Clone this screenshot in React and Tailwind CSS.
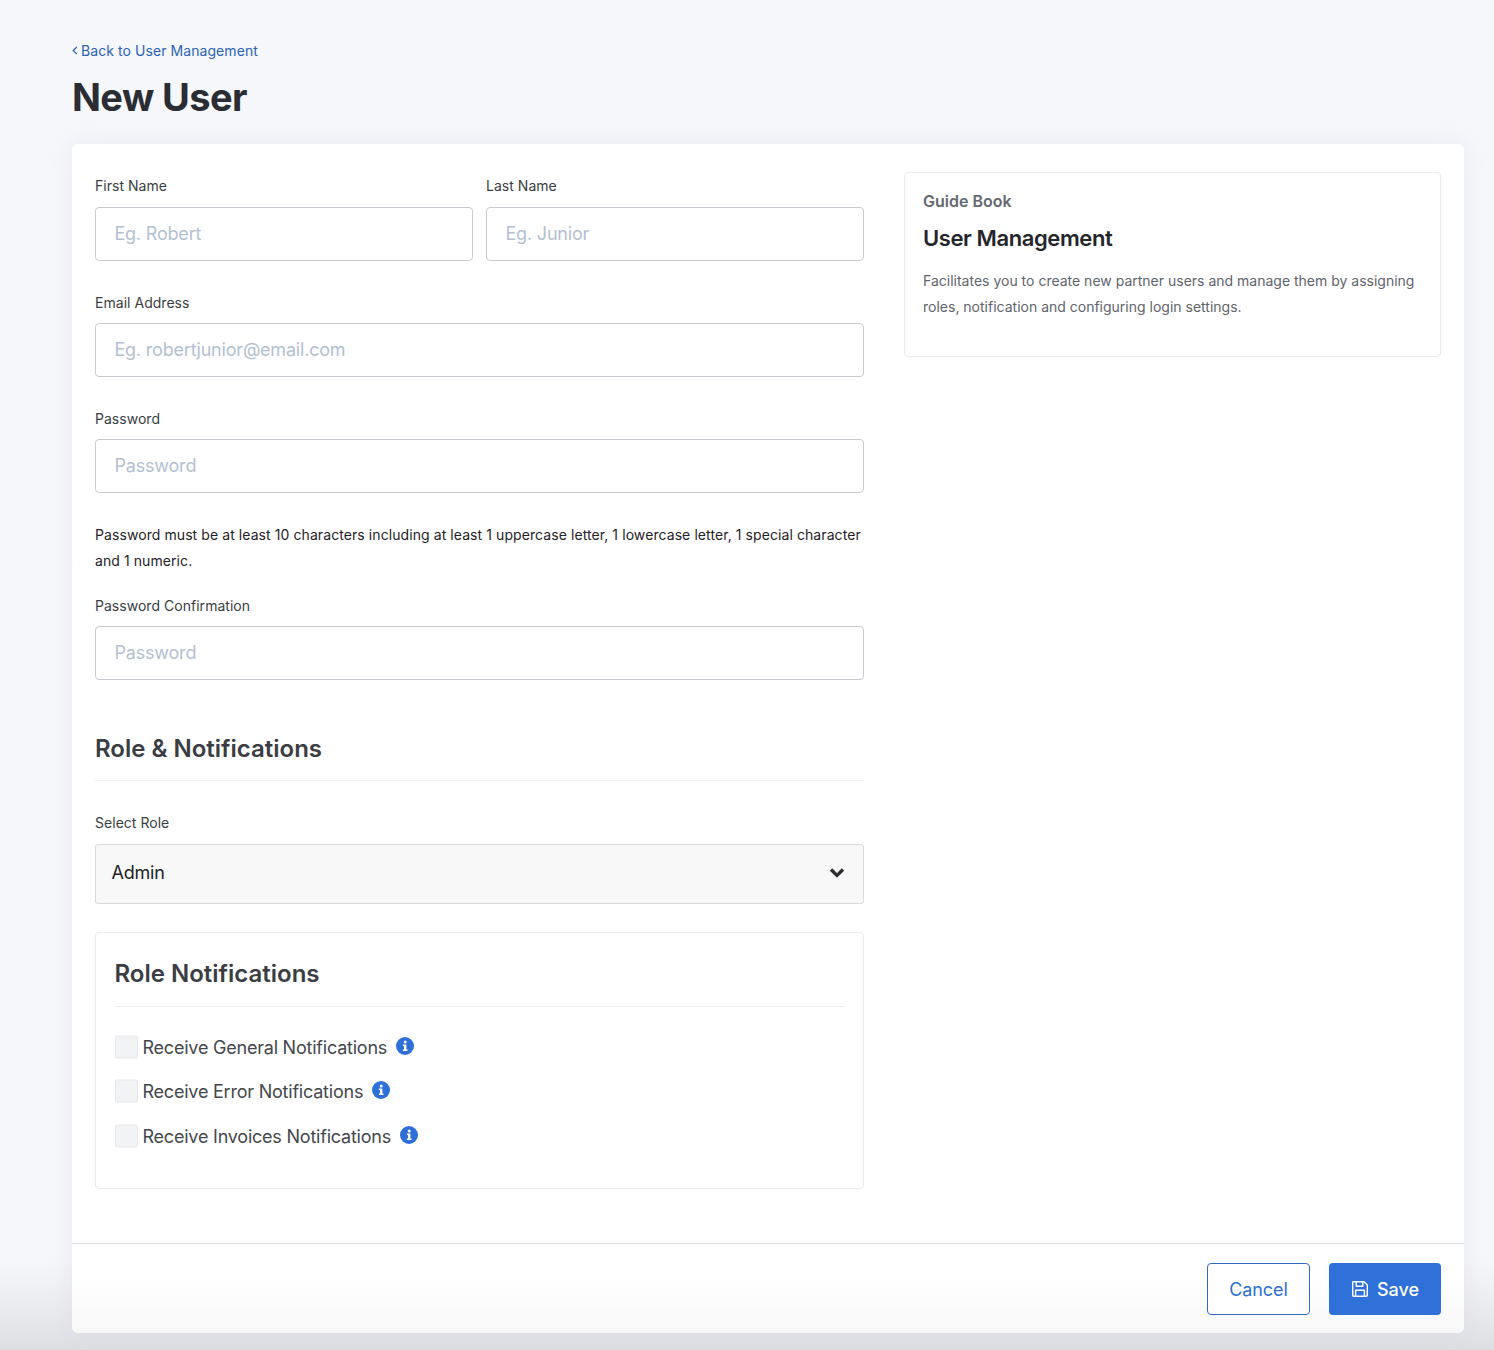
import React from "react";

function Field({ label, placeholder, className = "", gap = "mt-[10px]" }) {
  return (
    <div className={className}>
      <label className="block h-[21px] text-[14px] leading-[21px] tracking-[0.03px] text-[#3a3d42]">{label}</label>
      <input
        readOnly
        placeholder={placeholder}
        className={`${gap} block h-[54px] w-full rounded-[4px] border border-[#c9cbd0] bg-white pb-[1px] pl-[18.5px] pr-[19px] text-[18px] tracking-[-0.2px] text-[#333] outline-none placeholder:text-[#b4bfd1]`}
      />
    </div>
  );
}

function InfoIcon() {
  return (
    <svg width="18" height="18" viewBox="0 0 18 18" className="shrink-0">
      <circle cx="9" cy="9" r="9" fill="#2f6fd8" />
      <circle cx="9.2" cy="5" r="1.5" fill="#fff" />
      <path d="M6.9 7.5h3.5v5h1.1v1.4H6.9v-1.4H8v-3.6H6.9z" fill="#fff" />
    </svg>
  );
}

function SaveIcon() {
  return (
    <svg width="18" height="18" viewBox="0 0 18 18" fill="none" stroke="#fff" strokeWidth="1.4" strokeLinejoin="round">
      <path d="M2 1.7h11l3.3 3.3v10.3a1 1 0 0 1-1 1H2.7a1 1 0 0 1-1-1V2.7a1 1 0 0 1 .3-1z" />
      <path d="M5.2 1.7v4.6h6.6V1.7" />
      <path d="M4.6 16.3v-6.1h8.8v6.1" />
    </svg>
  );
}

function NotificationRow({ label, className = "" }) {
  return (
    <div className={`flex h-[24px] items-center ${className}`}>
      <span className="h-[23px] w-[23px] shrink-0 -translate-y-[0.5px] rounded-[2px] border border-[#e6e7ea] bg-[#f2f3f5]" />
      <span className="ml-[5px] translate-y-[1px] text-[18px] leading-[24px] tracking-[-0.22px] text-[#44474c]">{label}</span>
      <span className="mb-[2px] ml-[8.5px]">
        <InfoIcon />
      </span>
    </div>
  );
}

export default function App() {
  return (
    <div className="relative h-[1350px] overflow-hidden bg-[#f6f7fb] pl-[72px] pr-[30px] pt-[40px] font-['Inter',sans-serif]">
      {/* bottom fade behind the card */}
      <div className="pointer-events-none absolute inset-x-0 bottom-0 h-[90px] bg-gradient-to-b from-transparent via-[#e6e7eb] via-70% to-[#dddee2]" />

      {/* HEADER */}
      <a className="relative flex h-[21px] items-center text-[14px] leading-[21px] tracking-[0.07px] text-[#2c63b5]">
        <svg width="6" height="9" viewBox="0 0 6 9" className="mr-[3px]" fill="none" stroke="#2c63b5" strokeWidth="1.2">
          <path d="M4.8 1 1.2 4.5l3.6 3.5" />
        </svg>
        Back to User Management
      </a>
      <h1 className="relative mt-[9px] h-[74px] text-[38px] font-bold leading-[54px] tracking-[-0.6px] text-[#2a2d33]">New User</h1>

      {/* CARD */}
      <div className="relative h-[1189px] rounded-[6px] bg-white shadow-[0_0_24px_rgba(190,195,210,0.22)]">
        <div className="flex h-[1099px] gap-[40px] pl-[23px] pr-[23px] pt-[28px]">
          {/* FORM */}
          <div className="w-[769px] shrink-0">
            <div className="flex gap-[13px] pt-[3px]">
              <Field label="First Name" placeholder="Eg. Robert" className="flex-1" gap="mt-[11px]" />
              <Field label="Last Name" placeholder="Eg. Junior" className="flex-1" gap="mt-[11px]" />
            </div>
            <Field label="Email Address" placeholder="Eg. robertjunior@email.com" className="mt-[31px]" />
            <Field label="Password" placeholder="Password" className="mt-[31px]" />
            <p className="mt-[29px] text-[14px] leading-[26px] tracking-[0.08px] text-[#1f2226]">
              Password must be at least 10 characters including at least 1 uppercase letter, 1 lowercase letter, 1 special character and 1 numeric.
            </p>
            <Field label="Password Confirmation" placeholder="Password" className="mt-[21px]" />

            <h2 className="mt-[51px] border-b border-[#eeeff1] pb-[13px] text-[24px] font-semibold leading-[36px] text-[#3a3d42]">
              Role &amp; Notifications
            </h2>

            <label className="mt-[31px] block h-[21px] text-[14px] leading-[21px] tracking-[0.03px] text-[#3a3d42]">Select Role</label>
            <div className="mt-[11px] flex h-[60px] items-center justify-between rounded-[3px] border border-[#d9dadc] bg-[#f8f8f8] pl-[15.5px] pr-[18px]">
              <span className="-translate-y-[2.5px] text-[18px] tracking-[-0.2px] text-[#212327]">Admin</span>
              <svg width="16" height="11" viewBox="0 0 16 11" fill="none" stroke="#2a2c30" strokeWidth="3.2" className="-translate-y-[2px]">
                <path d="M2 2.5l6 6 6-6" />
              </svg>
            </div>

            <div className="mt-[28px] h-[257px] rounded-[4px] border border-[#eaebed] pl-[18.5px] pr-[18px] pt-[23px]">
              <h3 className="border-b border-[#eeeff1] pb-[14px] text-[24px] font-semibold leading-[36px] text-[#3a3d42]">
                Role Notifications
              </h3>
              <NotificationRow label="Receive General Notifications" className="mt-[28px]" />
              <NotificationRow label="Receive Error Notifications" className="mt-[20px]" />
              <NotificationRow label="Receive Invoices Notifications" className="mt-[21px]" />
            </div>
          </div>

          {/* GUIDE BOOK */}
          <div className="h-[185px] flex-1 rounded-[4px] border border-[#eaebed] px-[18px] pt-[17px]">
            <div className="text-[16px] font-semibold leading-[22px] text-[#646971]">Guide Book</div>
            <div className="mt-[11px] text-[22px] font-semibold leading-[30px] tracking-[-0.4px] text-[#24262b]">User Management</div>
            <p className="mt-[15px] text-[14px] leading-[26px] text-[#5f646b]">
              Facilitates you to create new partner users and manage them by assigning roles, notification and configuring login settings.
            </p>
          </div>
        </div>

        {/* FOOTER */}
        <div className="flex h-[90px] items-start justify-end gap-[19px] rounded-b-[6px] border-t border-[#dcdde0] bg-gradient-to-b from-white from-40% to-[#f7f7f8] pr-[23px] pt-[19px]">
          <button className="h-[52px] w-[103px] rounded-[4px] border border-[#2f6cc0] bg-white text-[18px] tracking-[-0.05px] text-[#2f6fd0]">
            Cancel
          </button>
          <button className="flex h-[52px] w-[112px] items-center justify-center gap-[8px] rounded-[4px] bg-[#2f70d9] text-[18px] font-medium text-white">
            <SaveIcon />
            Save
          </button>
        </div>
      </div>
    </div>
  );
}
